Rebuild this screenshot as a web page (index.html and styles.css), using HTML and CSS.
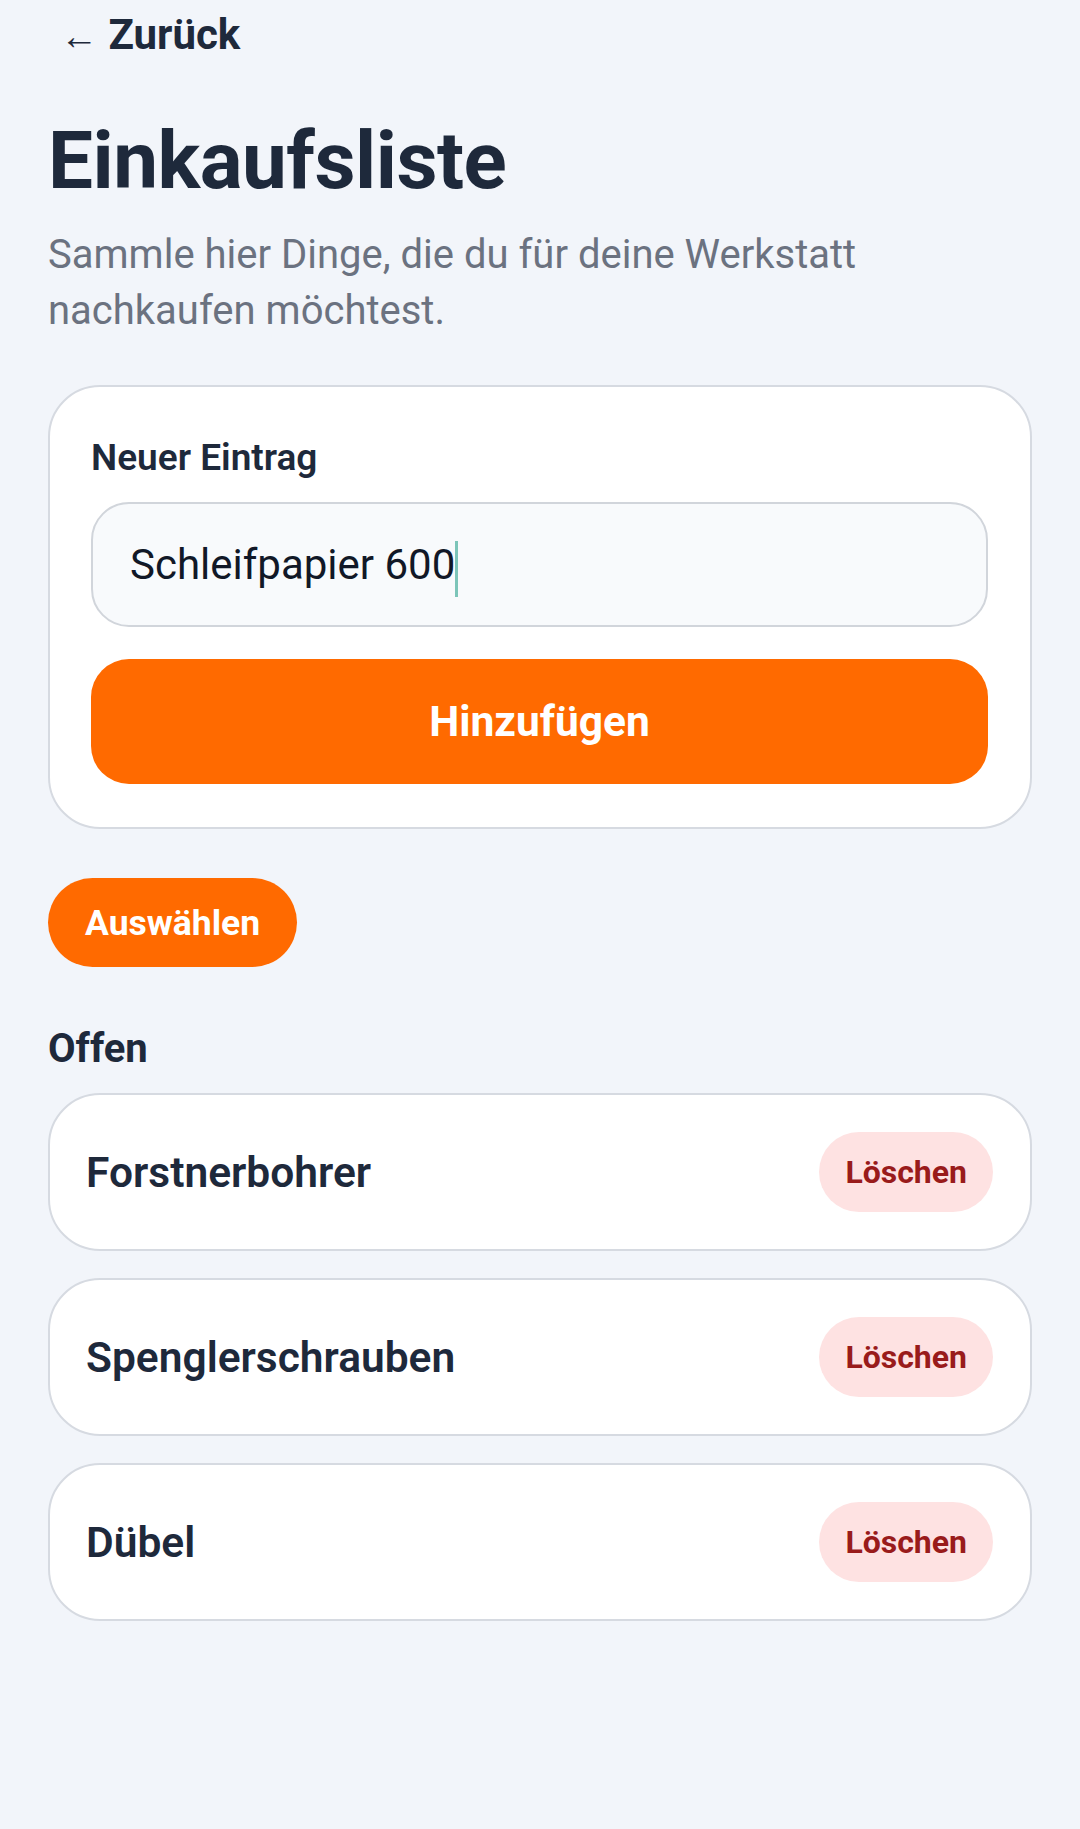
FILE: index.html
```html
<!DOCTYPE html>
<html lang="de">
<head>
    <meta charset="UTF-8">
    <meta name="viewport" content="width=device-width, initial-scale=1.0">
    <title>Einkaufsliste</title>
    <link rel="stylesheet" href="styles.css">
</head>
<body>
    <div class="page">
        <a class="back-link" href="#"><span class="back-arrow">&larr;</span> Zurück</a>

        <h1 class="page-title">Einkaufsliste</h1>
        <p class="page-intro">Sammle hier Dinge, die du für deine Werkstatt nachkaufen möchtest.</p>

        <form class="entry-card" onsubmit="return false;">
            <label class="entry-label" for="entry">Neuer Eintrag</label>
            <div class="entry-input" id="entry">Schleifpapier 600<span class="caret"></span></div>
            <button type="submit" class="add-button">Hinzufügen</button>
        </form>

        <button class="select-button">Auswählen</button>

        <h2 class="section-title">Offen</h2>

        <ul class="item-list">
            <li class="item">
                <span class="item-name">Forstnerbohrer</span>
                <button class="delete-button">Löschen</button>
            </li>
            <li class="item">
                <span class="item-name">Spenglerschrauben</span>
                <button class="delete-button">Löschen</button>
            </li>
            <li class="item">
                <span class="item-name">Dübel</span>
                <button class="delete-button">Löschen</button>
            </li>
        </ul>
    </div>
</body>
</html>
```

FILE: styles.css
```css
body {
    margin: 0;
    padding: 0;
    background-color: #f2f5fa;
    font-family: Roboto, "Liberation Sans", sans-serif;
    color: #1f2937;
}

.page {
    padding: 10px 48px 60px;
}

.back-link {
    display: inline-block;
    margin-left: 12px;
    font-size: 42px;
    line-height: 50px;
    font-weight: 700;
    color: #1e293b;
    text-decoration: none;
}

.back-arrow {
    font-size: 38px;
    font-weight: 400;
}

.page-title {
    margin: 52px 0 0;
    font-size: 80px;
    line-height: 96px;
    font-weight: 700;
    letter-spacing: -0.5px;
    color: #1e293b;
}

.page-intro {
    max-width: 880px;
    margin: 18px 0 0;
    font-size: 40px;
    line-height: 56px;
    color: #6b7280;
}

.entry-card {
    margin-top: 46px;
    padding: 50px 42px 43px 41px;
    background-color: white;
    border: 2px solid #d6dae1;
    border-radius: 52px;
}

.entry-label {
    display: block;
    font-size: 37px;
    line-height: 42px;
    font-weight: 600;
    color: #1e293b;
}

.entry-input {
    display: flex;
    align-items: center;
    box-sizing: border-box;
    height: 125px;
    margin-top: 23px;
    padding: 0 37px;
    background-color: #f8fafc;
    border: 2px solid #d1d5db;
    border-radius: 38px;
    font-size: 42px;
    color: #111827;
}

.caret {
    display: inline-block;
    width: 3px;
    height: 56px;
    margin-top: 8px;
    background-color: #7cc5b9;
}

.add-button {
    display: block;
    width: 100%;
    height: 125px;
    margin-top: 32px;
    border: none;
    border-radius: 38px;
    background-color: #ff6a00;
    color: white;
    font-family: inherit;
    font-size: 42.5px;
    font-weight: 700;
    cursor: pointer;
}

.select-button {
    display: block;
    height: 89px;
    margin-top: 49px;
    padding: 0 37px;
    border: none;
    border-radius: 45px;
    background-color: #ff6a00;
    color: white;
    font-family: inherit;
    font-size: 35.5px;
    font-weight: 700;
    cursor: pointer;
}

.section-title {
    margin: 59px 0 0;
    font-size: 40px;
    line-height: 46px;
    font-weight: 700;
    color: #1e293b;
}

.item-list {
    list-style: none;
    margin: 21px 0 0;
    padding: 0;
    display: flex;
    flex-direction: column;
    gap: 27px;
}

.item {
    display: flex;
    justify-content: space-between;
    align-items: center;
    box-sizing: border-box;
    height: 158px;
    padding: 0 37px 0 36px;
    background-color: white;
    border: 2px solid #d6dae1;
    border-radius: 52px;
}

.item-name {
    font-size: 42.5px;
    font-weight: 600;
    color: #1e293b;
}

.delete-button {
    height: 80px;
    padding: 0 26px;
    border: none;
    border-radius: 40px;
    background-color: #fee2e2;
    color: #991b1b;
    font-family: inherit;
    font-size: 32px;
    font-weight: 700;
    cursor: pointer;
}
```
